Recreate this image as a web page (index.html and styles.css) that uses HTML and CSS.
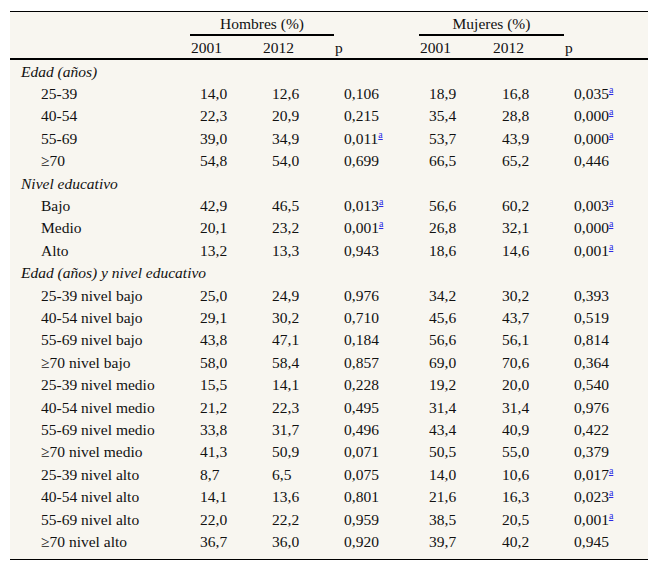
FILE: index.html
```html
<!DOCTYPE html>
<html lang="es">
<head>
<meta charset="utf-8">
<link rel="stylesheet" href="styles.css">
</head>
<body>
<div class="wrap">
<table class="tbl">
<colgroup>
<col class="c-label"><col class="c-n"><col class="c-n"><col class="c-p"><col class="c-n2"><col class="c-n"><col class="c-p2">
</colgroup>
<thead>
<tr class="h1">
<th></th>
<th colspan="2" class="group"><span>Hombres (%)</span></th>
<th></th>
<th colspan="2" class="group"><span>Mujeres (%)</span></th>
<th></th>
</tr>
<tr class="h2">
<th></th><th>2001</th><th>2012</th><th>p</th><th>2001</th><th>2012</th><th>p</th>
</tr>
</thead>
<tbody>
<tr class="sec"><td colspan="7">Edad (años)</td></tr>
<tr><td>25-39</td><td>14,0</td><td>12,6</td><td>0,106</td><td>18,9</td><td>16,8</td><td>0,035<sup><a href="#">a</a></sup></td></tr>
<tr><td>40-54</td><td>22,3</td><td>20,9</td><td>0,215</td><td>35,4</td><td>28,8</td><td>0,000<sup><a href="#">a</a></sup></td></tr>
<tr><td>55-69</td><td>39,0</td><td>34,9</td><td>0,011<sup><a href="#">a</a></sup></td><td>53,7</td><td>43,9</td><td>0,000<sup><a href="#">a</a></sup></td></tr>
<tr><td>≥70</td><td>54,8</td><td>54,0</td><td>0,699</td><td>66,5</td><td>65,2</td><td>0,446</td></tr>
<tr class="sec"><td colspan="7">Nivel educativo</td></tr>
<tr><td>Bajo</td><td>42,9</td><td>46,5</td><td>0,013<sup><a href="#">a</a></sup></td><td>56,6</td><td>60,2</td><td>0,003<sup><a href="#">a</a></sup></td></tr>
<tr><td>Medio</td><td>20,1</td><td>23,2</td><td>0,001<sup><a href="#">a</a></sup></td><td>26,8</td><td>32,1</td><td>0,000<sup><a href="#">a</a></sup></td></tr>
<tr><td>Alto</td><td>13,2</td><td>13,3</td><td>0,943</td><td>18,6</td><td>14,6</td><td>0,001<sup><a href="#">a</a></sup></td></tr>
<tr class="sec"><td colspan="7">Edad (años) y nivel educativo</td></tr>
<tr><td>25-39 nivel bajo</td><td>25,0</td><td>24,9</td><td>0,976</td><td>34,2</td><td>30,2</td><td>0,393</td></tr>
<tr><td>40-54 nivel bajo</td><td>29,1</td><td>30,2</td><td>0,710</td><td>45,6</td><td>43,7</td><td>0,519</td></tr>
<tr><td>55-69 nivel bajo</td><td>43,8</td><td>47,1</td><td>0,184</td><td>56,6</td><td>56,1</td><td>0,814</td></tr>
<tr><td>≥70 nivel bajo</td><td>58,0</td><td>58,4</td><td>0,857</td><td>69,0</td><td>70,6</td><td>0,364</td></tr>
<tr><td>25-39 nivel medio</td><td>15,5</td><td>14,1</td><td>0,228</td><td>19,2</td><td>20,0</td><td>0,540</td></tr>
<tr><td>40-54 nivel medio</td><td>21,2</td><td>22,3</td><td>0,495</td><td>31,4</td><td>31,4</td><td>0,976</td></tr>
<tr><td>55-69 nivel medio</td><td>33,8</td><td>31,7</td><td>0,496</td><td>43,4</td><td>40,9</td><td>0,422</td></tr>
<tr><td>≥70 nivel medio</td><td>41,3</td><td>50,9</td><td>0,071</td><td>50,5</td><td>55,0</td><td>0,379</td></tr>
<tr><td>25-39 nivel alto</td><td>8,7</td><td>6,5</td><td>0,075</td><td>14,0</td><td>10,6</td><td>0,017<sup><a href="#">a</a></sup></td></tr>
<tr><td>40-54 nivel alto</td><td>14,1</td><td>13,6</td><td>0,801</td><td>21,6</td><td>16,3</td><td>0,023<sup><a href="#">a</a></sup></td></tr>
<tr><td>55-69 nivel alto</td><td>22,0</td><td>22,2</td><td>0,959</td><td>38,5</td><td>20,5</td><td>0,001<sup><a href="#">a</a></sup></td></tr>
<tr class="last"><td>≥70 nivel alto</td><td>36,7</td><td>36,0</td><td>0,920</td><td>39,7</td><td>40,2</td><td>0,945</td></tr>
</tbody>
</table>
</div>
</body>
</html>
```

FILE: styles.css
```css
html, body {
  margin: 0;
  padding: 0;
  background: #ffffff;
}
.wrap {
  padding: 11px 11px 0 10px;
}
.tbl {
  width: 638px;
  table-layout: fixed;
  border-collapse: collapse;
  background: #f8f6f0;
  font-family: "Liberation Serif", "Times New Roman", Times, serif;
  font-size: 15.5px;
  color: #111;
  border-top: 1px solid #000;
  border-bottom: 1px solid #000;
}
.c-label { width: 181px; }
.c-n { width: 72px; }
.c-p { width: 85px; }
.c-n2 { width: 73px; }
.c-p2 { width: 83px; }
.tbl th {
  font-weight: normal;
  text-align: left;
  padding: 0;
  height: 22px;
  vertical-align: middle;
  line-height: 17px;
}
.tbl .h1 th.group {
  text-align: center;
  padding: 0 1px 0 0;
}
.tbl .h1 th.group span {
  display: block;
  border-bottom: 2px solid #000;
  padding: 3px 0 2px;
  margin-left: -1px;
}
.tbl .h2 th {
  height: 22px;
  border-bottom: 2px solid #000;
}
.tbl td {
  padding: 0 0 0 9px;
  height: 22.4px;
  line-height: 17px;
  vertical-align: middle;
  white-space: nowrap;
}
.tbl td:first-child {
  padding-left: 31px;
}
.tbl .sec td {
  font-style: italic;
  padding-left: 11px;
}
.tbl .last td {
  height: 26px;
  vertical-align: top;
  padding-top: 3px;
}
.tbl .last td:first-child {
  padding-left: 31px;
}
sup {
  font-size: 10px;
  line-height: 0;
  vertical-align: 6px;
}
sup a {
  color: #2a2ae6;
  text-decoration: underline;
}
```
